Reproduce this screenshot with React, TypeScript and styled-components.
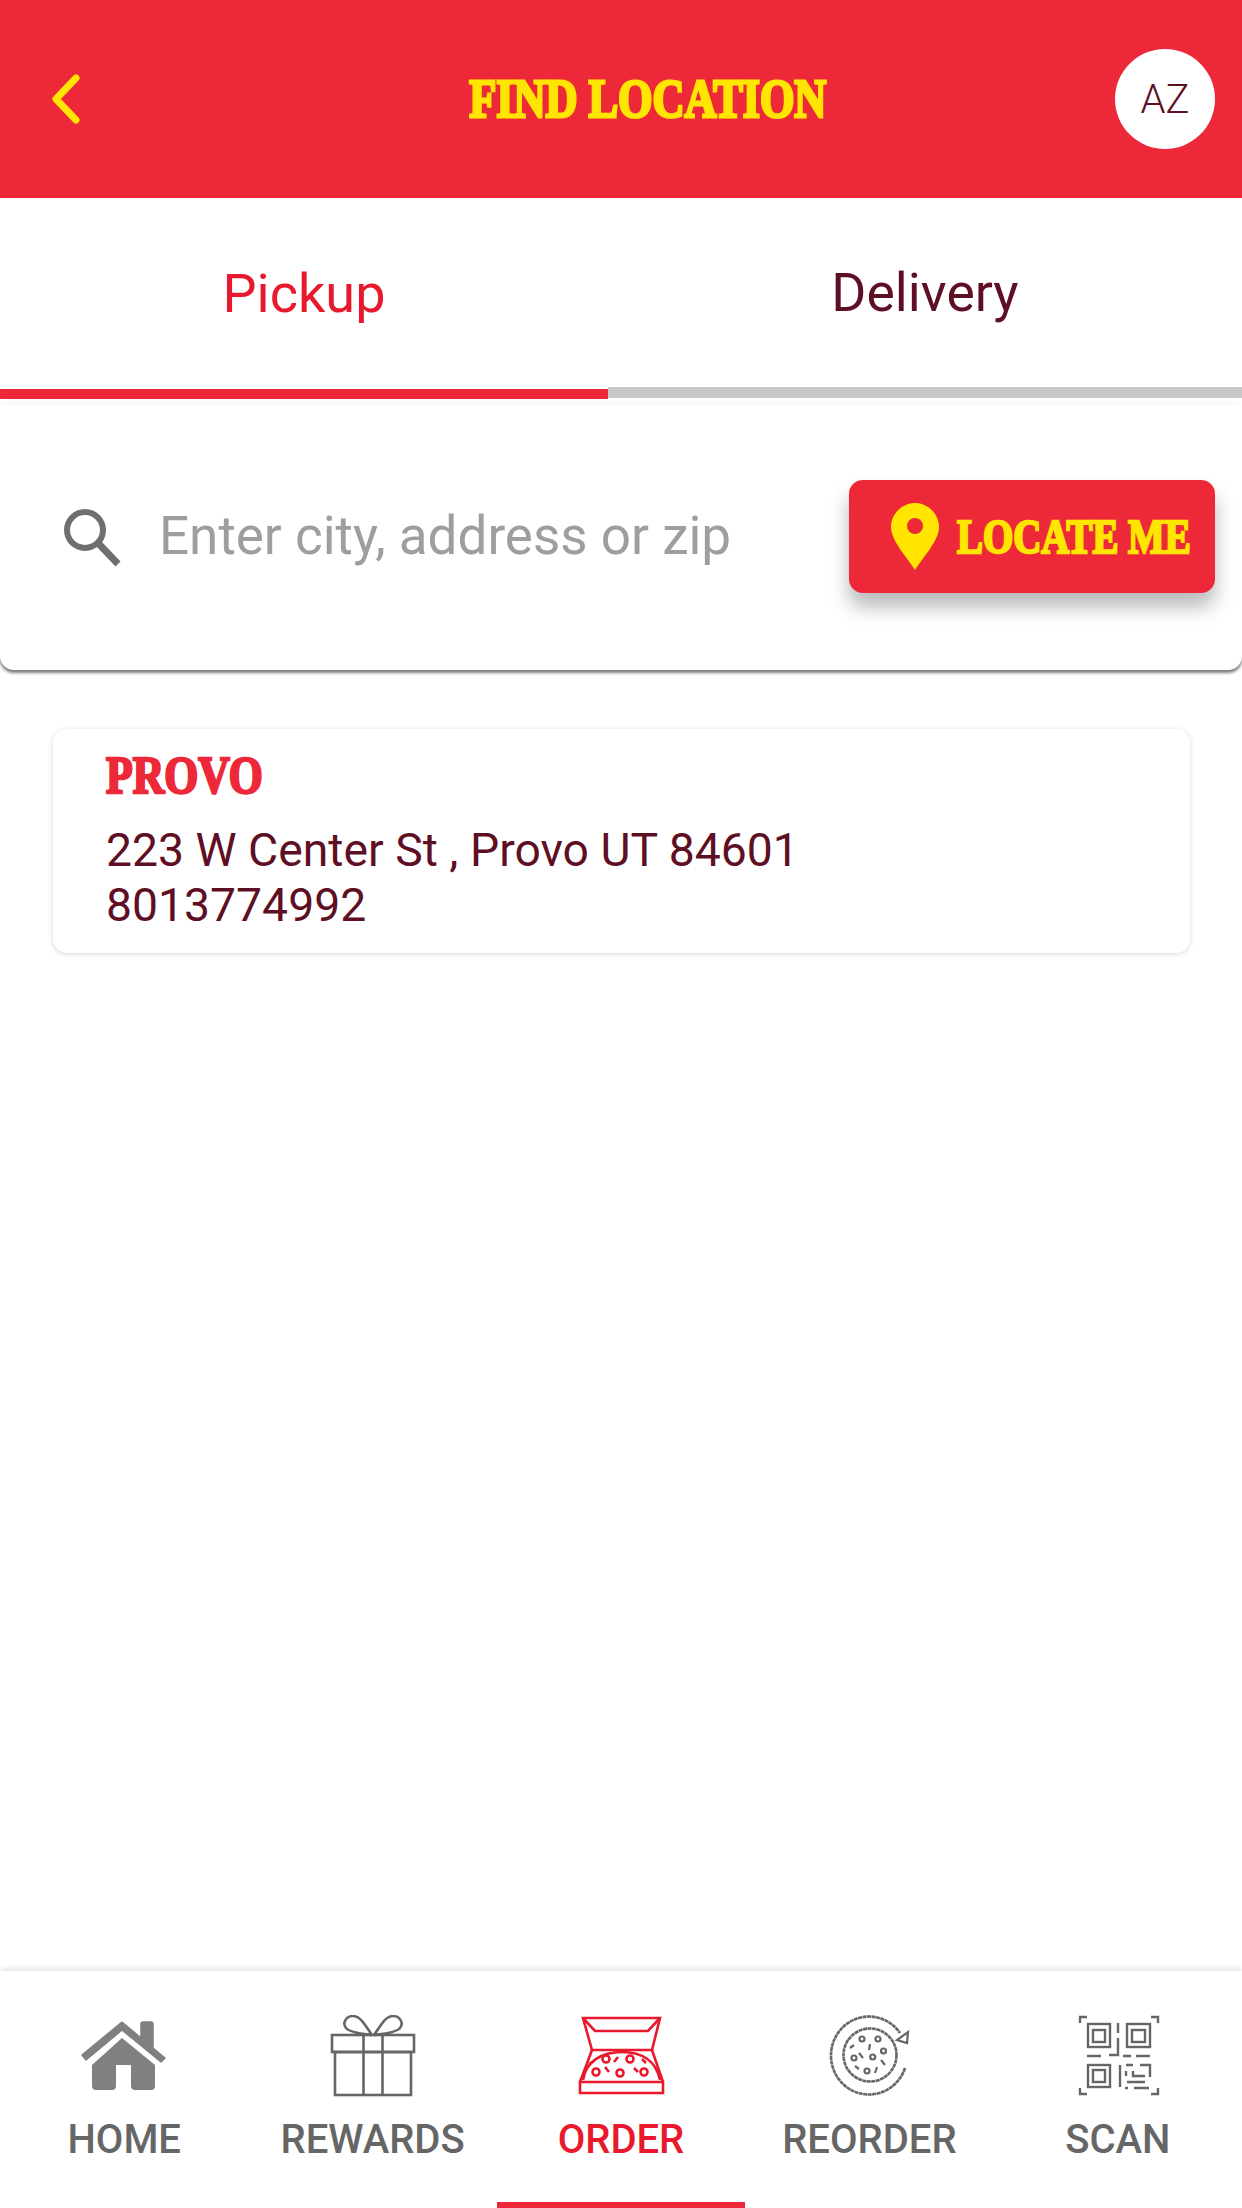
import React from "react";
import styled, { createGlobalStyle } from "styled-components";

const RED = "#ed2939";
const YELLOW = "#ffe500";
const MAROON = "#5e0f24";
const SLAB = `"Liberation Serif", "DejaVu Serif", serif`;

const GlobalStyle = createGlobalStyle`
  html, body {
    margin: 0;
    padding: 0;
    background: #fff;
  }
  body {
    font-family: Roboto, "Liberation Sans", sans-serif;
  }
  * {
    box-sizing: border-box;
  }
`;

const Page = styled.div`
  width: 1242px;
  height: 2208px;
  display: flex;
  flex-direction: column;
  overflow: hidden;
  background: #fff;
`;

const Header = styled.header`
  height: 198px;
  flex: none;
  background: ${RED};
  display: flex;
  align-items: center;
  justify-content: space-between;
  padding: 0 27px 0 50px;
`;

const BackButton = styled.button`
  border: 0;
  padding: 0;
  background: none;
  width: 32px;
  height: 50px;
  display: flex;
`;

const Title = styled.h1`
  margin: 0 0 0 98px;
  color: ${YELLOW};
  font-family: ${SLAB};
  font-size: 54px;
  line-height: 60px;
  font-weight: 700;
  white-space: nowrap;
  -webkit-text-stroke: 3px ${YELLOW};
  transform: scaleX(0.82);
`;

const Avatar = styled.div`
  width: 100px;
  height: 100px;
  border-radius: 50%;
  background: #fff;
  color: ${MAROON};
  font-size: 40px;
  font-weight: 300;
  display: flex;
  align-items: center;
  justify-content: center;
`;

const Tabs = styled.nav`
  display: grid;
  grid-template-columns: 608px 634px;
  align-items: start;
  flex: none;
`;

const Tab = styled.div<{ $active?: boolean }>`
  height: ${(p) => (p.$active ? 201 : 200)}px;
  display: flex;
  align-items: center;
  justify-content: center;
  font-size: ${(p) => (p.$active ? 54 : 53.5)}px;
  color: ${(p) => (p.$active ? "#e8192c" : MAROON)};
  border-bottom: ${(p) => (p.$active ? `10px solid ${RED}` : "11px solid #c8c8c8")};
`;

const SearchCard = styled.section`
  margin-top: 6px;
  height: 265px;
  flex: none;
  display: flex;
  align-items: center;
  padding: 0 27px 2px 62px;
  border-radius: 0 0 14px 14px;
  background: #fff;
  box-shadow: 0 3px 3px rgba(0, 0, 0, 0.5), 0 -2px 6px rgba(0, 0, 0, 0.04);
`;

const SearchIcon = styled.svg`
  width: 60px;
  height: 60px;
  flex: none;
`;

const SearchInput = styled.input`
  flex: 1;
  min-width: 0;
  margin-left: 37px;
  border: 0;
  outline: 0;
  padding: 0 0 2px;
  background: none;
  font-family: inherit;
  font-size: 53px;
  &::placeholder {
    color: #9e9e9e;
    opacity: 1;
  }
`;

const LocateButton = styled.button`
  width: 366px;
  height: 113px;
  flex: none;
  border: 0;
  border-radius: 14px;
  background: ${RED};
  box-shadow: 0 14px 20px rgba(0, 0, 0, 0.28);
  display: flex;
  align-items: center;
  padding: 0 0 0 42px;
  gap: 18px;
`;

const PinIcon = styled.svg`
  width: 48px;
  height: 67px;
  flex: none;
`;

const LocateLabel = styled.span`
  color: ${YELLOW};
  font-family: ${SLAB};
  font-size: 48px;
  font-weight: 700;
  white-space: nowrap;
  -webkit-text-stroke: 2.5px ${YELLOW};
  transform: scaleX(0.81);
  transform-origin: left center;
`;

const LocationCard = styled.article`
  margin: 59px 52px 0 53px;
  height: 224px;
  flex: none;
  border-radius: 14px;
  background: #fff;
  box-shadow: 0 1px 5px rgba(0, 0, 0, 0.16);
  padding: 17px 53px;
`;

const LocationName = styled.h2`
  margin: 0;
  color: ${RED};
  font-family: ${SLAB};
  font-size: 52px;
  line-height: 60px;
  font-weight: 700;
  -webkit-text-stroke: 2.5px ${RED};
  transform: scaleX(0.84);
  transform-origin: left center;
`;

const LocationLine = styled.div`
  color: ${MAROON};
  font-size: 46.3px;
  line-height: 55px;
  &:first-of-type {
    margin-top: 17px;
  }
`;

const BottomNav = styled.nav`
  margin-top: auto;
  height: 237px;
  flex: none;
  display: grid;
  grid-template-columns: repeat(5, 1fr);
  background: #fff;
  box-shadow: 0 -2px 6px rgba(0, 0, 0, 0.12);
`;

const NavItem = styled.div<{ $active?: boolean }>`
  display: flex;
  flex-direction: column;
  align-items: center;
  padding-top: 44px;
  color: ${(p) => (p.$active ? "#e8192c" : "#666")};
  border-bottom: 6px solid ${(p) => (p.$active ? RED : "transparent")};
`;

const NavIcon = styled.svg`
  width: 90px;
  height: 84px;
  flex: none;
`;

const NavLabel = styled.span`
  margin-top: 18px;
  font-size: 40px;
  line-height: 46px;
  font-weight: 500;
`;

const HomeIcon = () => (
  <NavIcon viewBox="0 0 90 84">
    <path
      d="M3 40 L43 7 L62 23 V9 Q62 7 64 7 H72 Q74 7 74 9 V33 L86 43 L82 47 L43 15 L7 45 Z"
      fill="#808080"
      stroke="#808080"
      strokeWidth="1.5"
      strokeLinejoin="round"
    />
    <path d="M43 23 L76 50 V71 Q76 75 72 75 H56 Q52 75 52 71 V50 H37 V71 Q37 75 33 75 H17 Q13 75 13 71 V50 Z" fill="#808080" />
  </NavIcon>
);

const GiftIcon = () => (
  <NavIcon viewBox="0 0 90 84" fill="none" stroke="#666" strokeWidth="2.6">
    <rect x="4" y="20" width="82" height="17" />
    <rect x="7" y="37" width="76" height="43" />
    <path d="M35.5 20 V80 M54.5 20 V80" />
    <path d="M44 20 C36 19 22 18 18 13 C14 8 18 1 25 1 C33 1 38 12 44 20" />
    <path d="M46 20 C54 19 68 18 72 13 C76 8 72 1 65 1 C57 1 52 12 46 20" />
  </NavIcon>
);

const PizzaBoxIcon = () => (
  <NavIcon viewBox="0 0 90 84" fill="none" stroke="#e8192c" strokeWidth="2.6">
    <path d="M7 3 H84 L76 35 H16 Z" />
    <path d="M7 3 L19 16 H72 L84 3" />
    <path d="M4 67 H87 V78 H4 Z" />
    <path d="M4 67 L16 35 M87 67 L76 35" />
    <path d="M7 65 C10 46 26 37 46 37 C66 37 80 46 84 65" />
    <circle cx="30" cy="44" r="3.5" />
    <circle cx="54" cy="44" r="3.5" />
    <circle cx="20" cy="57" r="3.5" />
    <circle cx="44" cy="58" r="3.5" />
    <circle cx="68" cy="57" r="3.5" />
    <path d="M42 42 L38 47 M29 52 L33 57 M58 53 L62 57 M13 49 L18 46 M66 44 L70 48" />
  </NavIcon>
);

const ReorderIcon = () => (
  <NavIcon viewBox="0 0 90 84" fill="none" stroke="#666" strokeWidth="2.6">
    <path d="M81 53 A38 39 0 1 1 76 18" strokeDasharray="4 0.5" />
    <path d="M84 17 L83 28 L73 25 Z" strokeWidth="2.2" />
    <circle cx="46" cy="40" r="26.5" strokeDasharray="4 0.5" />
    <g strokeWidth="2.2">
      <circle cx="38" cy="24" r="2.5" />
      <circle cx="54" cy="24" r="2.5" />
      <circle cx="59.5" cy="36" r="2.5" />
      <circle cx="30" cy="43" r="2.5" />
      <circle cx="48.7" cy="42" r="2.5" />
      <circle cx="43" cy="56" r="2.5" />
      <path d="M46 29 L45 35 M26 33 L30 30 M35 38 L39 43 M57 45 L61 50 M31 51 L35 54 M53 52 L51 58" />
    </g>
  </NavIcon>
);

const QrIcon = () => (
  <NavIcon viewBox="0 0 90 84" fill="none" stroke="#666" strokeWidth="2.4">
    <path d="M7 8 V2 H14 M78 2 H85 V8 M7 73 V79 H14 M78 79 H85 V73" />
    <rect x="15" y="9" width="22" height="23" />
    <rect x="20" y="15" width="12" height="12" />
    <rect x="54" y="9" width="23" height="23" />
    <rect x="59" y="15" width="13" height="12" />
    <rect x="15" y="50" width="22" height="22" />
    <rect x="20" y="55" width="12" height="12" />
    <path d="M45 8 V18 M45 23 V40 H36 M14 41 H28 M50 41 H58 M63 41 H77" />
    <path d="M47 50 V72 M53 50 H60 M53 56 V61 M67 50 H77 V62 M60 56 V61 H72 M54 67 H72 M52 73 H55 M61 73 H76" />
  </NavIcon>
);

const navItems = [
  { label: "HOME", icon: <HomeIcon /> },
  { label: "REWARDS", icon: <GiftIcon /> },
  { label: "ORDER", icon: <PizzaBoxIcon />, active: true },
  { label: "REORDER", icon: <ReorderIcon /> },
  { label: "SCAN", icon: <QrIcon /> },
];

export default function App() {
  return (
    <Page>
      <GlobalStyle />
      <Header>
        <BackButton aria-label="Back">
          <svg width="32" height="50" viewBox="0 0 32 50" fill="none">
            <path d="M26 4 L6 25 L26 46" stroke={YELLOW} strokeWidth="7" strokeLinecap="round" strokeLinejoin="round" />
          </svg>
        </BackButton>
        <Title>FIND LOCATION</Title>
        <Avatar>AZ</Avatar>
      </Header>
      <Tabs>
        <Tab $active>Pickup</Tab>
        <Tab>Delivery</Tab>
      </Tabs>
      <SearchCard>
        <SearchIcon viewBox="0 0 60 60" fill="none" stroke="#6f6f6f">
          <circle cx="23" cy="23" r="18" strokeWidth="6" />
          <path d="M36 36 L56 57" strokeWidth="7" />
        </SearchIcon>
        <SearchInput placeholder="Enter city, address or zip" />
        <LocateButton>
          <PinIcon viewBox="0 0 48 67">
            <path
              fillRule="evenodd"
              fill={YELLOW}
              d="M24 0 C37 0 48 11 48 24 C48 38 32 54 24 67 C16 54 0 38 0 24 C0 11 11 0 24 0 Z M24 15 A8 8 0 1 0 24 31 A8 8 0 1 0 24 15 Z"
            />
          </PinIcon>
          <LocateLabel>LOCATE ME</LocateLabel>
        </LocateButton>
      </SearchCard>
      <LocationCard>
        <LocationName>PROVO</LocationName>
        <LocationLine>223 W Center St , Provo UT 84601</LocationLine>
        <LocationLine>8013774992</LocationLine>
      </LocationCard>
      <BottomNav>
        {navItems.map((item) => (
          <NavItem key={item.label} $active={item.active}>
            {item.icon}
            <NavLabel>{item.label}</NavLabel>
          </NavItem>
        ))}
      </BottomNav>
    </Page>
  );
}
